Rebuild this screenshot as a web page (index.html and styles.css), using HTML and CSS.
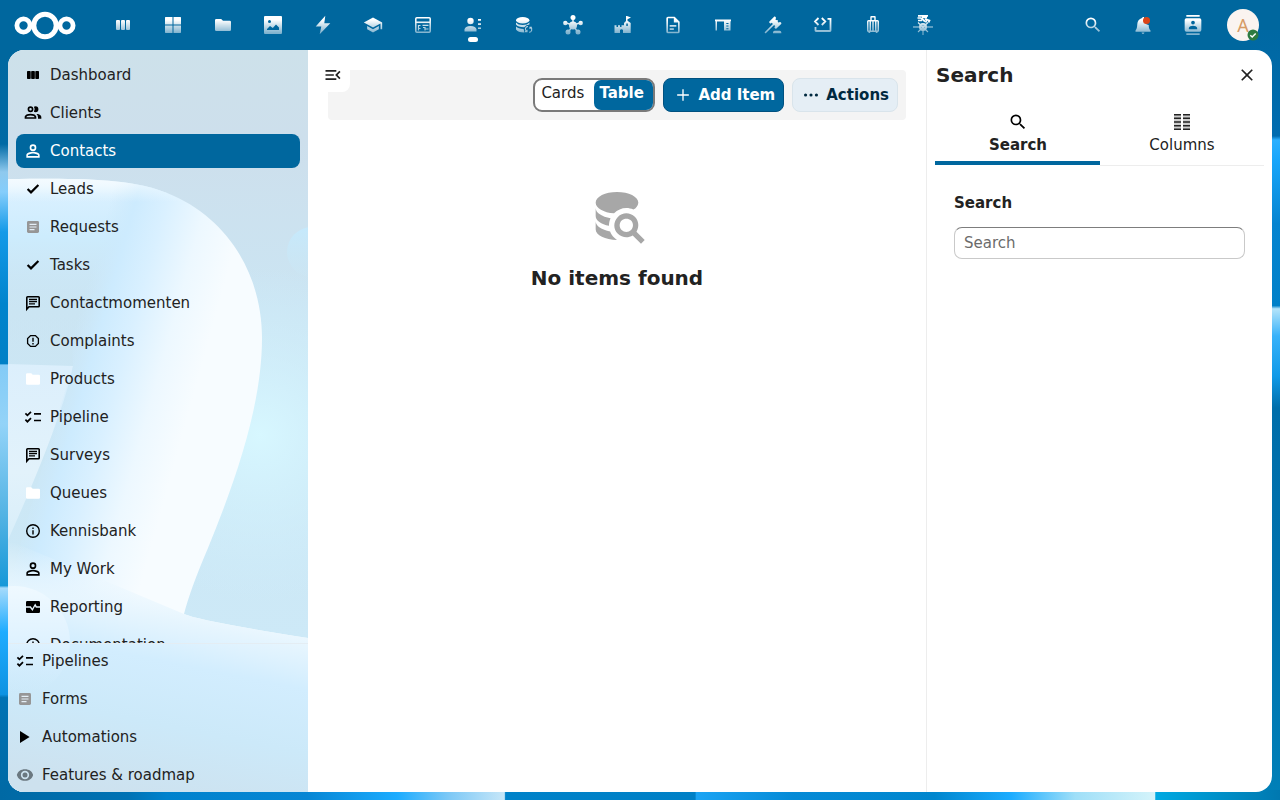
FILE: index.html
```
<!DOCTYPE html>
<html lang="en">
<head>
    <meta charset="utf-8">
    <title>Contacts - Nextcloud</title>
    <meta name="viewport" content="width=device-width, initial-scale=1">
    <link rel="stylesheet" href="styles.css">
</head>
<body>
    <!-- shared icons -->
    <svg class="sprite" width="0" height="0">
        <symbol id="i-user" viewBox="0 0 24 24"><path d="M12,4A4,4 0 0,1 16,8A4,4 0 0,1 12,12A4,4 0 0,1 8,8A4,4 0 0,1 12,4M12,6A2,2 0 0,0 10,8A2,2 0 0,0 12,10A2,2 0 0,0 14,8A2,2 0 0,0 12,6M12,13C14.67,13 20,14.33 20,17V20H4V17C4,14.33 9.33,13 12,13M12,14.9C9.03,14.9 5.9,16.36 5.9,17V18.1H18.1V17C18.1,16.36 14.97,14.9 12,14.9Z"/></symbol>
        <symbol id="i-check" viewBox="0 0 20 20"><path d="M4.6 10L8 13.4L15.4 6" fill="none" stroke="currentColor" stroke-width="2.2"/></symbol>
        <symbol id="i-form" viewBox="0 0 20 20"><rect x="4" y="4" width="12" height="12" rx="1.4" fill="#969696"/><path d="M6.5 7.4H13.5M6.5 10H13.5M6.5 12.6H11.5" stroke="#e4eef5" stroke-width="1.1"/></symbol>
        <symbol id="i-message" viewBox="0 0 20 20"><path d="M3.8 16.2V4.6Q3.8 3.8 4.6 3.8H15.4Q16.2 3.8 16.2 4.6V13Q16.2 13.8 15.4 13.8H6Z" fill="none" stroke="currentColor" stroke-width="1.6"/><path d="M6 6.5H14M6 8.7H14M6 10.9H12" stroke="currentColor" stroke-width="1.3"/></symbol>
        <symbol id="i-folder" viewBox="0 0 20 20"><path d="M4.3 4.3H8.3L9.7 5.7H15.7Q17 5.7 17 7V14.6Q17 15.8 15.7 15.8H4.3Q3 15.8 3 14.6V5.6Q3 4.3 4.3 4.3Z" fill="#fff"/></symbol>
        <symbol id="i-list" viewBox="0 0 20 20"><path d="M2.4 6.4L4.4 8.4L8 4.8M2.4 12.7L4.4 14.7L8 11.1M11 6.8H18M11 13.5H18" fill="none" stroke="currentColor" stroke-width="1.7"/></symbol>
        <symbol id="i-info" viewBox="0 0 20 20"><circle cx="10" cy="10" r="6.3" fill="none" stroke="currentColor" stroke-width="1.4"/><path d="M10 9.2V13.4M10 6.5V7.9" stroke="currentColor" stroke-width="1.4"/></symbol>
        <symbol id="i-search" viewBox="0 0 24 24"><path d="M9.5,3A6.5,6.5 0 0,1 16,9.5C16,11.11 15.41,12.59 14.44,13.73L14.71,14H15.5L20.5,19L19,20.5L14,15.5V14.71L13.73,14.44C12.59,15.41 11.11,16 9.5,16A6.5,6.5 0 0,1 3,9.5A6.5,6.5 0 0,1 9.5,3M9.5,5C7,5 5,7 5,9.5C5,12 7,14 9.5,14C12,14 14,12 14,9.5C14,7 12,5 9.5,5Z"/></symbol>
    </svg>

    <!-- wallpaper -->
    <svg class="wallpaper" viewBox="0 0 1280 800" preserveAspectRatio="none">
        <defs>
            <linearGradient id="wl" gradientUnits="userSpaceOnUse" x1="0" y1="0" x2="0" y2="800">
                <stop offset="0" stop-color="#00679e"/>
                <stop offset=".18" stop-color="#006aa5"/>
                <stop offset=".215" stop-color="#8fc9ee"/>
                <stop offset=".24" stop-color="#85cdfb"/>
                <stop offset=".29" stop-color="#149ae8"/>
                <stop offset=".38" stop-color="#0084cd"/>
                <stop offset=".455" stop-color="#0080c6"/>
                <stop offset=".456" stop-color="#84cbf6"/>
                <stop offset=".53" stop-color="#93d3f8"/>
                <stop offset=".64" stop-color="#55b4e4"/>
                <stop offset=".732" stop-color="#1798d8"/>
                <stop offset=".735" stop-color="#a5dafb"/>
                <stop offset=".79" stop-color="#1eacff"/>
                <stop offset=".868" stop-color="#0d92e2"/>
                <stop offset=".872" stop-color="#0072b4"/>
                <stop offset="1" stop-color="#0069a4"/>
            </linearGradient>
            <linearGradient id="wr" gradientUnits="userSpaceOnUse" x1="0" y1="0" x2="0" y2="800">
                <stop offset="0" stop-color="#00679e"/>
                <stop offset=".17" stop-color="#006cb0"/>
                <stop offset=".175" stop-color="#2bb0ff"/>
                <stop offset=".2" stop-color="#18a6fb"/>
                <stop offset=".28" stop-color="#0584d0"/>
                <stop offset=".382" stop-color="#0080c8"/>
                <stop offset=".386" stop-color="#b4e4fa"/>
                <stop offset=".42" stop-color="#38b2fa"/>
                <stop offset=".47" stop-color="#109ae8"/>
                <stop offset=".51" stop-color="#006eaa"/>
                <stop offset=".75" stop-color="#0072ae"/>
                <stop offset="1" stop-color="#0080b8"/>
            </linearGradient>
            <linearGradient id="wb" gradientUnits="userSpaceOnUse" x1="0" y1="0" x2="1280" y2="0">
                <stop offset="0" stop-color="#0069a4"/>
                <stop offset=".1" stop-color="#0072b4"/>
                <stop offset=".13" stop-color="#0082cd"/>
                <stop offset=".24" stop-color="#0786d4"/>
                <stop offset=".31" stop-color="#1cacff"/>
                <stop offset=".35" stop-color="#7cc8f6"/>
                <stop offset=".394" stop-color="#c6e6f8"/>
                <stop offset=".395" stop-color="#0082c9"/>
                <stop offset=".543" stop-color="#0080c6"/>
                <stop offset=".544" stop-color="#1ba4f4"/>
                <stop offset=".62" stop-color="#058ad6"/>
                <stop offset=".73" stop-color="#0086ce"/>
                <stop offset=".79" stop-color="#1cacff"/>
                <stop offset=".84" stop-color="#9fdff8"/>
                <stop offset=".902" stop-color="#d4f3fa"/>
                <stop offset=".903" stop-color="#00a9e2"/>
                <stop offset="1" stop-color="#0078b0"/>
            </linearGradient>
        </defs>
        <rect width="1280" height="800" fill="#00679e"/>
        <rect y="60" width="30" height="740" fill="url(#wl)"/>
        <rect x="1250" y="30" width="30" height="770" fill="url(#wr)"/>
        <rect y="790" width="1280" height="10" fill="url(#wb)"/>
    </svg>

    <header class="header">
        <svg class="logo" width="62" height="30" viewBox="0 0 62 30" fill="none" stroke="#fff">
            <circle cx="31" cy="15.500" r="11.200" stroke-width="5"/>
            <circle cx="9.500" cy="15.500" r="6.600" stroke-width="4.800"/>
            <circle cx="52.500" cy="15.500" r="6.600" stroke-width="4.800"/>
        </svg>
        <nav class="app-menu">
            <a class="app"><svg viewBox="0 0 20 20"><rect x="3" y="5" width="4" height="10" rx="1"/><rect x="8" y="5" width="4" height="10" rx="1"/><rect x="13" y="5" width="4" height="10" rx="1"/></svg></a>
            <a class="app"><svg viewBox="0 0 20 20"><path d="M2.500 2H9.500V9.500H2V2.500ZM10.500 2H17.500L18 2.500V9.500H10.500ZM2 10.500H9.500V18H2.500L2 17.500ZM10.500 10.500H18V17.500L17.500 18H10.500Z"/></svg></a>
            <a class="app"><svg viewBox="0 0 20 20"><path d="M3.300 4H8.200L10 5.800H16.700Q18 5.800 18 7.100V14.700Q18 16 16.700 16H3.300Q2 16 2 14.700V5.300Q2 4 3.300 4Z"/></svg></a>
            <a class="app"><svg viewBox="0 0 20 20"><path fill-rule="evenodd" d="M2 1H18Q19 1 19 2V18Q19 19 18 19H2Q1 19 1 18V2Q1 1 2 1ZM4 15H16V12.500L13 9.500L9.800 13L7 11L4 14ZM6.500 5A1.500 1.500 0 1 0 6.500 8A1.500 1.500 0 1 0 6.500 5Z"/></svg></a>
            <a class="app"><svg viewBox="0 0 20 20"><path d="M12.300 .7L2.700 11.500H8.300L6.700 19.300L17.300 8.300H11.300Z"/></svg></a>
            <a class="app"><svg viewBox="0 0 24 24"><path d="M12,3L1,9L12,15L21,10.09V17H23V9M5,13.18V17.18L12,21L19,17.18V13.18L12,17L5,13.18Z"/></svg></a>
            <a class="app"><svg viewBox="0 0 20 20" fill="none" stroke="#fff"><rect x="2.800" y="2.800" width="14.400" height="14.400" rx="1" stroke-width="1.500"/><path d="M3 7.300H17" stroke-width="1.600"/><path d="M5.500 15.500V10.500H7.500M5.500 13.500H7.500M9.500 10.300H15.500M10 12.500H12V15.500M12.500 14H15.500" stroke-width="1.200"/></svg></a>
            <a class="app active"><svg viewBox="0 0 20 20"><circle cx="7.500" cy="6" r="3.200"/><path d="M1.500 16.500V14.500Q2 11 7.500 11Q13 11 13.500 14.500V16.500Z"/><path d="M15 4H18V5.700H15ZM15 8.200H18V9.900H15ZM15 12.400H18V14.100H15Z"/></svg></a>
            <a class="app"><svg viewBox="0 0 20 20"><ellipse cx="9.700" cy="5.200" rx="6.700" ry="3.200"/><path d="M3 7.500Q5 10 9.700 10T16.400 7.500V9.500Q13 9.500 11.300 12.200Q5 12.300 3 9.600ZM3 11.500Q5 13.500 10.600 14L11.500 17.500Q5 17.700 3 14.500Z"/><path d="M15 11.500A2.700 2.700 0 0 0 13.500 16.400M16 17.300A2.700 2.700 0 0 0 17.500 12.300M12 16.600H14V14.800M18.800 12.200H17V14" fill="none" stroke="#fff" stroke-width="1.100"/></svg></a>
            <a class="app"><svg viewBox="0 0 20 20"><path d="M10 10V2.500M10 10L3 8M10 10L17 8M10 10L5.500 17M10 10L14.500 17" stroke="#fff" stroke-width="1.400"/><circle cx="10" cy="10.500" r="4"/><circle cx="10" cy="2.500" r="2.500"/><circle cx="2.300" cy="8" r="2.200"/><circle cx="17.700" cy="8" r="2.200"/><circle cx="5" cy="17" r="2.500"/><circle cx="15" cy="17" r="2.500"/></svg></a>
            <a class="app"><svg viewBox="0 0 20 20"><path fill-rule="evenodd" d="M1.500 10.300H3.500V12H5V10.300H7V12H8.500V10.300H11V8L13 6V1H14L18 2.500L14.500 4.300V5.700L17.700 8V18H10V15Q8.500 13.500 7 15V18H1.500ZM13.300 8.500V11H14.800V8.500Z"/></svg></a>
            <a class="app"><svg viewBox="0 0 24 24"><path d="M6,2A2,2 0 0,0 4,4V20A2,2 0 0,0 6,22H18A2,2 0 0,0 20,20V8L14,2H6M6,4H13V9H18V20H6V4M8,12V14H16V12H8M8,16V18H13V16H8Z"/></svg></a>
            <a class="app"><svg viewBox="0 0 20 20"><path fill-rule="evenodd" d="M2 4.500H18V6L17.500 6.500V15.500H11V6.500H4V15.500H2.500V6.500L2 6ZM13.300 8V9H15.500V8ZM13.300 10.600V11.600H15.500V10.600ZM13.300 13.200V14.200H15.500V13.200Z"/></svg></a>
            <a class="app"><svg viewBox="0 0 24 24"><path d="M2.300,20.280L11.900,10.680L10.500,9.260L9.780,9.970C9.390,10.360 8.760,10.360 8.370,9.970L7.660,9.260C7.270,8.870 7.270,8.240 7.660,7.850L13.320,2.190C13.710,1.800 14.340,1.800 14.730,2.190L15.440,2.900C15.830,3.290 15.830,3.920 15.440,4.310L14.730,5L16.150,6.430C16.540,6.040 17.170,6.040 17.560,6.430C17.950,6.820 17.950,7.460 17.560,7.850L18.970,9.260L19.680,8.550C20.070,8.160 20.710,8.160 21.100,8.550L21.800,9.260C22.190,9.650 22.190,10.290 21.800,10.680L16.150,16.330C15.760,16.720 15.120,16.720 14.730,16.330L14,15.630C13.630,15.240 13.630,14.600 14,14.210L14.730,13.500L13.320,12.090L3.720,21.700C3.320,22.090 2.690,22.090 2.300,21.700C1.910,21.310 1.910,20.670 2.300,20.280M20,19A2,2 0 0,1 22,21V22H12V21A2,2 0 0,1 14,19H20Z"/></svg></a>
            <a class="app"><svg viewBox="0 0 20 20" fill="none" stroke="#fff" stroke-width="1.800"><path d="M5.500 3L2 6.500L5.500 10M8.800 3L12.300 6.500L8.800 10M14.500 3.800H17.500V15.500Q17.500 16 17 16H3Q2.500 16 2.500 15.500V12"/></svg></a>
            <a class="app"><svg viewBox="0 0 20 20"><path fill-rule="evenodd" d="M7.300 5V2Q7.300 1 8.300 1H11.700Q12.700 1 12.700 2V5H14.500Q16 5 16 6.500V15.500Q16 17 14.500 17V18H12.800V17H7.200V18H5.500V17Q4 17 4 15.500V6.500Q4 5 5.500 5ZM8.700 2.400V5H11.300V2.400ZM5.500 6.500V15.500H6.500V6.500ZM8 6.500V15.500H9.300V6.500ZM10.700 6.500V15.500H12V6.500ZM13.500 6.500V15.500H14.500V6.500Z"/></svg></a>
            <a class="app"><svg viewBox="0 0 20 20" fill="none" stroke="#fff"><path d="M5 .9H15M4.500 3H8M9 2.500H14M12 4L16.500 5.500L15.500 7.500M5 5.500H9M8 3L12 6.500M14.500 4L12.500 7.500" stroke-width="1.700"/><circle cx="10" cy="12" r="3.100" stroke-width="1.800"/><path d="M0 12H20M10 9V20M5 7.500L15 17M15 7.500L5 17" stroke-width="1.100"/></svg></a>
        </nav>
        <div class="header-end">
            <a class="app"><svg><use href="#i-search"/></svg></a>
            <a class="app"><svg viewBox="0 0 20 20"><path d="M11 2C9.500 2 9.300 2.500 9 3C6 4 4.500 6 4.300 9C4.100 12.500 3.800 14 2.500 15.500V16.700H17.500V15.500C16.200 14 15.800 13 15.700 10Q11.500 9.500 11 5ZM8.500 17.500H11.500Q11 19 10 19T8.500 17.500Z"/></svg><span class="dot"></span></a>
            <a class="app"><svg viewBox="0 0 24 24"><path fill-rule="evenodd" d="M20,0H4V2H20V0M4,24H20V22H4V24M20,4H4A2,2 0 0,0 2,6V18A2,2 0 0,0 4,20H20A2,2 0 0,0 22,18V6A2,2 0 0,0 20,4M12,6.750A2.250,2.250 0 0,1 12,11.250A2.250,2.250 0 0,1 12,6.750M17,17H7V15.500C7,13.830 10.330,13 12,13C13.670,13 17,13.830 17,15.500V17Z"/></svg></a>
            <div class="avatar">A
                <svg class="status" width="12" height="12" viewBox="0 0 12 12"><circle cx="6" cy="6" r="5.500" fill="#2d7b41"/><path d="M3.300 6.200L5.200 8L8.700 4.500" fill="none" stroke="#fff" stroke-width="1.500"/></svg>
            </div>
        </div>
    </header>

    <div class="content">
        <nav class="navigation">
            <svg class="nav-bg" viewBox="8 50 300 742">
                <defs>
                    <linearGradient id="base" x1="0" y1="0" x2="0" y2="1">
                        <stop offset="0" stop-color="#cde1ea"/>
                        <stop offset=".12" stop-color="#cddfec"/>
                        <stop offset=".35" stop-color="#cbe5f3"/>
                        <stop offset=".8" stop-color="#cde9f7"/>
                    </linearGradient>
                    <radialGradient id="glow" gradientUnits="userSpaceOnUse" cx="260" cy="435" r="170">
                        <stop offset="0" stop-color="#d7f7ff"/>
                        <stop offset="1" stop-color="#d0effc" stop-opacity="0"/>
                    </radialGradient>
                    <linearGradient id="bubble" x1="0" y1="0" x2="0" y2="1">
                        <stop offset="0" stop-color="#c5e9fc"/>
                        <stop offset="1" stop-color="#cbe9f7" stop-opacity=".2"/>
                    </linearGradient>
                    <linearGradient id="stem" gradientUnits="userSpaceOnUse" x1="62" y1="372" x2="213" y2="414">
                        <stop offset="0" stop-color="#cde9fb" stop-opacity="0"/>
                        <stop offset=".16" stop-color="#cdebfe"/>
                        <stop offset=".35" stop-color="#d9f0ff"/>
                        <stop offset=".6" stop-color="#edf8ff"/>
                        <stop offset=".85" stop-color="#f7fcff"/>
                    </linearGradient>
                    <linearGradient id="cap" gradientUnits="userSpaceOnUse" x1="0" y1="178" x2="0" y2="345">
                        <stop offset="0" stop-color="#f0f9ff"/>
                        <stop offset=".1" stop-color="#d9f0ff"/>
                        <stop offset=".35" stop-color="#cdecfd"/>
                        <stop offset="1" stop-color="#cae2ef" stop-opacity="0"/>
                    </linearGradient>
                    <linearGradient id="rim" gradientUnits="userSpaceOnUse" x1="0" y1="178" x2="0" y2="202">
                        <stop offset="0" stop-color="#f4fbff" stop-opacity=".9"/>
                        <stop offset="1" stop-color="#f4fbff" stop-opacity="0"/>
                    </linearGradient>
                    <linearGradient id="wing" gradientUnits="userSpaceOnUse" x1="0" y1="364" x2="0" y2="580">
                        <stop offset="0" stop-color="#dceffc"/>
                        <stop offset=".5" stop-color="#e2f2fb"/>
                        <stop offset="1" stop-color="#d3ecf9"/>
                    </linearGradient>
                    <linearGradient id="foot" gradientUnits="userSpaceOnUse" x1="130" y1="565" x2="85" y2="792">
                        <stop offset="0" stop-color="#eff9ff" stop-opacity="0"/>
                        <stop offset=".2" stop-color="#e6f5fe"/>
                        <stop offset=".38" stop-color="#d2edfe"/>
                        <stop offset=".65" stop-color="#cce9f9"/>
                        <stop offset="1" stop-color="#cde1ee"/>
                    </linearGradient>
                    <linearGradient id="ball" gradientUnits="userSpaceOnUse" x1="0" y1="586" x2="0" y2="698">
                        <stop offset="0" stop-color="#eff9ff"/>
                        <stop offset=".5" stop-color="#dff2ff"/>
                        <stop offset="1" stop-color="#cdeafb" stop-opacity="0"/>
                    </linearGradient>
                </defs>
                <rect x="8" y="50" width="300" height="742" fill="url(#base)"/>
                <rect x="8" y="250" width="300" height="400" fill="url(#glow)"/>
                <circle cx="312" cy="252" r="25" fill="url(#bubble)"/>
                <path fill="url(#cap)" d="M8 179C80 178 130 178 167 193C180 260 120 330 70 366L8 364Z"/>
                <path fill="url(#wing)" d="M8 364L73 366Q62 420 8 540V620H0Z"/>
                <path fill="url(#stem)" d="M8 179C80 178 130 178 167 193C228 217 262 275 262 338C262 400 240 470 208 548Q190 590 184 614Q200 621 308 638V792H8V590Q40 470 73 366Q70 260 8 179Z"/>
                <path fill="url(#rim)" d="M8 179C80 178 130 178 167 193L190 204H8Z"/>
                <path fill="url(#foot)" d="M8 540L184 614Q200 621 308 638V792H8Z"/>
                <circle cx="14" cy="642" r="56" fill="url(#ball)"/>
            </svg>
            <ul class="nav-list">
                <li><svg viewBox="0 0 20 20"><rect x="4" y="6" width="3.700" height="8" rx=".8"/><rect x="8.150" y="6" width="3.700" height="8" rx=".8"/><rect x="12.300" y="6" width="3.700" height="8" rx=".8"/></svg>Dashboard</li>
                <li><svg viewBox="0 0 24 24"><path d="M13.070 10.410A5 5 0 0 0 13.070 4.590A3.390 3.390 0 0 1 15 4A3.500 3.500 0 0 1 15 11A3.390 3.390 0 0 1 13.070 10.410M5.500 7.500A3.500 3.500 0 1 1 9 11A3.500 3.500 0 0 1 5.500 7.500M7.500 7.500A1.500 1.500 0 1 0 9 6A1.500 1.500 0 0 0 7.500 7.500M16 17V19H2V17S2 13 9 13 16 17 16 17M14 17C13.860 16.220 12.670 15 9 15S4.070 16.310 4 17M15.950 13A5.320 5.320 0 0 1 18 17V19H22V17S22 13.370 15.940 13Z"/></svg>Clients</li>
                <li class="current"><svg><use href="#i-user"/></svg>Contacts</li>
                <li><svg><use href="#i-check"/></svg>Leads</li>
                <li><svg><use href="#i-form"/></svg>Requests</li>
                <li><svg><use href="#i-check"/></svg>Tasks</li>
                <li><svg><use href="#i-message"/></svg>Contactmomenten</li>
                <li><svg viewBox="0 0 20 20"><path d="M7.600 4.600H12.400L15.400 7.600V12.400L12.400 15.400H7.600L4.600 12.400V7.600Z" fill="none" stroke="#000" stroke-width="1.300"/><path d="M10 6.800V10.800M10 12V13.400" stroke="#000" stroke-width="1.400"/></svg>Complaints</li>
                <li><svg><use href="#i-folder"/></svg>Products</li>
                <li><svg><use href="#i-list"/></svg>Pipeline</li>
                <li><svg><use href="#i-message"/></svg>Surveys</li>
                <li><svg><use href="#i-folder"/></svg>Queues</li>
                <li><svg><use href="#i-info"/></svg>Kennisbank</li>
                <li><svg><use href="#i-user"/></svg>My Work</li>
                <li><svg viewBox="0 0 20 20"><path d="M4.200 4H15.800Q17 4 17 5.200V9.300H13.700L12.200 6.400L9.300 11.500L7.800 9.300H3V5.200Q3 4 4.200 4ZM3 10.700H7L9.500 14L12 9.200L12.900 10.700H17V14.800Q17 16 15.800 16H4.200Q3 16 3 14.800Z"/></svg>Reporting</li>
                <li><svg><use href="#i-info"/></svg>Documentation</li>
            </ul>
            <ul class="nav-footer">
                <li><svg><use href="#i-list"/></svg>Pipelines</li>
                <li><svg><use href="#i-form"/></svg>Forms</li>
                <li><svg viewBox="0 0 20 20"><path d="M5 4L14.600 10L5 16Z"/></svg>Automations</li>
                <li><svg viewBox="0 0 24 24" fill="#6b7880"><path d="M12,9A3,3 0 0,0 9,12A3,3 0 0,0 12,15A3,3 0 0,0 15,12A3,3 0 0,0 12,9M12,17A5,5 0 0,1 7,12A5,5 0 0,1 12,7A5,5 0 0,1 17,12A5,5 0 0,1 12,17M12,5C7,5 3.500,7.500 2.200,12C3.500,16.500 7,19 12,19C17,19 20.500,16.500 21.800,12C20.500,7.500 17,5 12,5Z"/></svg>Features &amp; roadmap</li>
            </ul>
        </nav>

        <main class="main">
            <button class="nav-toggle"><svg width="20" height="20" viewBox="0 0 24 24"><path d="M21,15.610L19.590,17L14.580,12L19.590,7L21,8.390L17.440,12L21,15.610M3,6H16V8H3V6M3,13V11H13V13H3M3,18V16H16V18H3Z"/></svg></button>
            <div class="toolbar">
                <div class="view-switch">
                    <span class="view">Cards</span>
                    <span class="view selected">Table</span>
                </div>
                <button class="btn primary"><svg width="20" height="20" viewBox="0 0 24 24"><path d="M19,12.800H12.800V19H11.200V12.800H5V11.200H11.200V5H12.800V11.200H19V12.800Z"/></svg>Add Item</button>
                <button class="btn secondary"><svg width="20" height="20" viewBox="0 0 24 24"><circle cx="5.500" cy="12" r="1.900"/><circle cx="12" cy="12" r="1.900"/><circle cx="18.500" cy="12" r="1.900"/></svg>Actions</button>
            </div>
            <div class="empty">
                <svg width="64" height="64" viewBox="0 0 24 24"><path d="M18.680,12.320C16.920,10.560 14.070,10.570 12.320,12.330C10.560,14.090 10.560,16.940 12.320,18.690C13.810,20.170 16.110,20.430 17.890,19.320L21,22.390L22.390,21L19.300,17.890C20.430,16.120 20.170,13.800 18.680,12.320M17.270,17.270C16.290,18.250 14.710,18.240 13.730,17.270C12.760,16.290 12.760,14.710 13.740,13.730C14.710,12.760 16.290,12.760 17.270,13.730C18.240,14.710 18.240,16.290 17.270,17.270M10.900,20.100C10.250,19.440 9.740,18.650 9.420,17.780C6.270,17.250 4,15.760 4,14V17C4,19.210 7.580,21 12,21V21C11.600,20.740 11.230,20.440 10.900,20.100M4,9V12C4,13.680 6.070,15.120 9,15.700C9,15.630 9,15.570 9,15.500C9,14.570 9.200,13.650 9.580,12.810C6.340,12.300 4,10.790 4,9M12,3C7.580,3 4,4.790 4,7C4,9 7,10.680 10.850,11H10.900C12.100,9.740 13.760,9 15.500,9C16.410,9 17.310,9.190 18.140,9.560C19.170,9.090 19.870,8.120 20,7C20,4.790 16.420,3 12,3Z"/></svg>
                <h2>No items found</h2>
            </div>
        </main>

        <aside class="sidebar">
            <div class="sidebar-head">
                <h2>Search</h2>
                <button class="close"><svg width="20" height="20" viewBox="0 0 24 24"><path d="M19,6.410L17.590,5L12,10.590L6.410,5L5,6.410L10.590,12L5,17.590L6.410,19L12,13.410L17.590,19L19,17.590L13.410,12L19,6.410Z"/></svg></button>
            </div>
            <div class="tabs">
                <div class="tab selected"><svg width="20" height="20"><use href="#i-search"/></svg>Search</div>
                <div class="tab"><svg width="20" height="20" viewBox="0 0 20 20"><path d="M2 2H9V18H2ZM11 2H18V18H11Z" fill="#ccc"/><path d="M2 2.700H9M2 6.300H9M2 10H9M2 13.700H9M2 17.300H9M11 2.700H18M11 6.300H18M11 10H18M11 13.700H18M11 17.300H18" stroke="#222" stroke-width="1.500"/></svg>Columns</div>
            </div>
            <div class="filter">
                <h3>Search</h3>
                <input type="text" placeholder="Search">
            </div>
        </aside>
    </div>
</body>
</html>
```

FILE: styles.css
```
* {
    box-sizing: border-box;
}

body {
    margin: 0;
    height: 100vh;
    overflow: hidden;
    display: flex;
    flex-direction: column;
    background-color: #00679e;
    color: #222;
    font-family: "DejaVu Sans", sans-serif;
    font-size: 15px;
}

ul, h2, h3 {
    margin: 0;
    padding: 0;
    list-style: none;
}

button {
    border: none;
    padding: 0;
    background: none;
    font: inherit;
    color: inherit;
}

svg {
    display: block;
    flex: none;
}

.sprite {
    position: absolute;
}

.wallpaper {
    position: absolute;
    top: 0;
    left: 0;
    width: 100%;
    height: 100%;
    z-index: -1;
}

/* header */
.header {
    display: flex;
    align-items: center;
    height: 50px;
    flex: none;
    padding: 0 12px 0 14px;
}

.logo {
    margin-right: 22px;
}

.app-menu, .header-end {
    display: flex;
    align-items: center;
}

.header-end {
    margin-left: auto;
}

.app {
    position: relative;
    display: flex;
    align-items: center;
    justify-content: center;
    width: 50px;
    height: 50px;
}

.app svg {
    width: 20px;
    height: 20px;
    fill: #fff;
    -webkit-mask-image: linear-gradient(#fff 25%, rgba(255,255,255,.5) 90%);
    mask-image: linear-gradient(#fff 25%, rgba(255,255,255,.5) 90%);
}

.app svg[fill="none"] {
    fill: none;
}

.app.active::after {
    content: "";
    position: absolute;
    left: 20px;
    bottom: 8px;
    width: 10px;
    height: 5px;
    border-radius: 3px;
    background-color: #fff;
}

.dot {
    position: absolute;
    top: 17px;
    right: 18px;
    width: 7px;
    height: 7px;
    border-radius: 50%;
    background-color: #db4417;
}

.avatar {
    position: relative;
    width: 32px;
    height: 32px;
    margin: 0 9px;
    border-radius: 50%;
    background-color: #faf4f0;
    color: #d69b66;
    font-family: "Noto Sans", sans-serif;
    font-weight: 400;
    font-size: 18px;
    line-height: 33px;
    text-align: center;
}

.status {
    position: absolute;
    right: 0;
    bottom: 0;
}

/* page */
.content {
    display: flex;
    flex: 1;
    min-height: 0;
    margin: 0 8px 8px;
    border-radius: 16px;
    overflow: hidden;
    background-color: #fff;
}

.navigation {
    position: relative;
    display: flex;
    flex-direction: column;
    width: 300px;
    flex: none;
}

.nav-bg {
    position: absolute;
    top: 0;
    left: 0;
    width: 300px;
    height: 742px;
}

.nav-list {
    position: relative;
    flex: 1;
    min-height: 0;
    overflow: hidden;
    padding: 8px 8px 0;
}

.nav-footer {
    position: relative;
    border-top: 1px solid #e4edf3;
}

.navigation li {
    display: flex;
    align-items: center;
    height: 34px;
    margin-bottom: 4px;
    padding-left: 7px;
    gap: 7px;
    border-radius: 8px;
    line-height: 34px;
}

.navigation li svg {
    width: 20px;
    height: 20px;
    color: #000;
}

.navigation li.current {
    background-color: #00679e;
    color: #fff;
}

.navigation li.current svg {
    fill: #fff;
}

.nav-footer li:last-child {
    margin-bottom: 0;
}

.main {
    position: relative;
    flex: 1;
    padding: 20px;
}

.nav-toggle {
    position: absolute;
    top: 8px;
    left: 8px;
    width: 34px;
    height: 34px;
    padding: 7px;
    border-radius: 8px;
    background-color: #fff;
    fill: #222;
}

.toolbar {
    display: flex;
    justify-content: flex-end;
    align-items: center;
    gap: 8px;
    height: 50px;
    padding: 0 8px;
    border-radius: 4px;
    background-color: #f4f4f4;
}

.view-switch {
    display: flex;
    width: 122px;
    height: 34px;
    border: 2px solid #7a7a7a;
    border-radius: 9px;
    background-color: #fff;
    overflow: hidden;
}

.view {
    width: 59px;
    padding-left: 6px;
    line-height: 26px;
}

.view.selected {
    border-radius: 7px 0 0 7px;
    padding-left: 5px;
    background-color: #00679e;
    color: #fff;
    font-weight: bold;
}

.btn {
    display: flex;
    align-items: center;
    height: 34px;
    border-radius: 8px;
    padding: 0 8px;
    font-weight: bold;
    border: 1px solid;
}

.btn.primary {
    gap: 5px;
    padding-left: 9px;
    background-color: #00679e;
    border-color: #005180;
    color: #fff;
    fill: #fff;
}

.btn.secondary {
    gap: 5px;
    background-color: #e5eef5;
    border-color: #d9e4eb;
    color: #00293f;
    fill: #00293f;
}

.empty {
    display: flex;
    flex-direction: column;
    align-items: center;
    margin-top: 64px;
}

.empty svg {
    fill: #a7a7a7;
}

.empty h2 {
    margin-top: 15px;
    font-size: 20px;
    line-height: 30px;
}

/* right sidebar */
.sidebar {
    width: 346px;
    flex: none;
    padding: 8px;
    border-left: 1px solid #ededed;
}

.sidebar-head {
    display: flex;
    justify-content: space-between;
    align-items: center;
    height: 34px;
    padding-left: 1px;
}

.sidebar-head h2 {
    font-size: 20px;
}

.close {
    padding: 7px;
    fill: #222;
}

.tabs {
    display: flex;
    margin-top: 12px;
}

.tab {
    flex: 1;
    display: flex;
    flex-direction: column;
    align-items: center;
    height: 62px;
    padding-top: 8px;
    line-height: 26px;
    border-bottom: 1px solid #ededed;
}

.tab.selected {
    height: 61px;
    padding-left: 1px;
    border-bottom: 4px solid #00679e;
    font-weight: bold;
}

.filter {
    padding: 27px 19px 0;
}

.filter h3 {
    font-size: 15px;
    line-height: 20px;
}

.filter input {
    width: 100%;
    height: 32px;
    margin-top: 14px;
    padding: 0 9px;
    border: 1px solid #c9c9c9;
    border-top-color: #7d7d7d;
    border-radius: 8px;
    font: inherit;
}

.filter input::placeholder {
    color: #6b6b6b;
}
```
